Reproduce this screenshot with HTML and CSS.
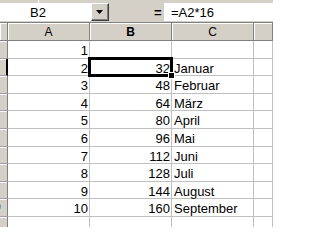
FILE: index.html
```html
<!DOCTYPE html>
<html>
<head>
<meta charset="utf-8">
<link rel="stylesheet" href="styles.css">
</head>
<body>
<div class="toolbar">
  <div class="strip"><div class="strip-seg"></div></div>
  <div class="bar">
    <div class="namebox">B2</div>
    <div class="dropbtn"><svg width="7" height="4" viewBox="0 0 7 4"><path d="M0 0H7L3.5 4Z" fill="#000"/></svg></div>
    <div class="eq">=</div>
    <div class="formula">=A2*16</div>
  </div>
</div>
<div class="sheet">
  <div class="hdr corner"></div><div class="hdr">A</div><div class="hdr sel">B</div><div class="hdr">C</div><div class="hdr"></div>

  <div class="rowhdr"><span>1</span></div><div class="cell num">1</div><div class="cell num"></div><div class="cell txt"></div><div class="cell"></div>
  <div class="rowhdr sel"><span>2</span></div><div class="cell num">2</div><div class="cell num">32</div><div class="cell txt">Januar</div><div class="cell"></div>
  <div class="rowhdr"><span>3</span></div><div class="cell num">3</div><div class="cell num">48</div><div class="cell txt">Februar</div><div class="cell"></div>
  <div class="rowhdr"><span>4</span></div><div class="cell num">4</div><div class="cell num">64</div><div class="cell txt">März</div><div class="cell"></div>
  <div class="rowhdr"><span>5</span></div><div class="cell num">5</div><div class="cell num">80</div><div class="cell txt">April</div><div class="cell"></div>
  <div class="rowhdr"><span>6</span></div><div class="cell num">6</div><div class="cell num">96</div><div class="cell txt">Mai</div><div class="cell"></div>
  <div class="rowhdr"><span>7</span></div><div class="cell num">7</div><div class="cell num">112</div><div class="cell txt">Juni</div><div class="cell"></div>
  <div class="rowhdr"><span>8</span></div><div class="cell num">8</div><div class="cell num">128</div><div class="cell txt">Juli</div><div class="cell"></div>
  <div class="rowhdr"><span>9</span></div><div class="cell num">9</div><div class="cell num">144</div><div class="cell txt">August</div><div class="cell"></div>
  <div class="rowhdr"><span>10</span></div><div class="cell num">10</div><div class="cell num">160</div><div class="cell txt">September</div><div class="cell"></div>
  <div class="rowhdr"><span>11</span></div><div class="cell num"></div><div class="cell num"></div><div class="cell txt"></div><div class="cell"></div>
</div>
<div class="selection"></div>
<div class="handle"></div>
</body>
</html>
```
FILE: styles.css
```css
html, body {
  margin: 0;
  padding: 0;
}
body {
  width: 273px;
  height: 227px;
  overflow: hidden;
  position: relative;
  background: #fff;
  font-family: "Liberation Sans", Arial, sans-serif;
  font-size: 13px;
  color: #000;
}
.toolbar {
  background: #d4d0c8;
  height: 22px;
  display: flex;
  flex-direction: column;
}
.strip {
  height: 3px;
  display: flex;
}
.strip-seg {
  width: 38px;
  border-right: 1px solid #fff;
}
.bar {
  display: flex;
  height: 18px;
}
.namebox {
  width: 91px;
  box-sizing: border-box;
  background: #fff;
  text-align: center;
  padding-right: 15px;
  padding-top: 2px;
  line-height: 16px;
}
.dropbtn {
  width: 18px;
  box-sizing: border-box;
  background: #d4d0c8;
  border: 1px solid;
  border-color: #fff #404040 #404040 #fff;
  box-shadow: inset -1px -1px #808080;
  display: flex;
  align-items: center;
  justify-content: center;
  padding-right: 1px;
}
.eq {
  margin-left: 45px;
  width: 10px;
  font-weight: bold;
  padding-top: 2px;
  line-height: 16px;
}
.formula {
  flex: 1;
  background: #fff;
  padding-left: 7px;
  padding-top: 2px;
  line-height: 16px;
}
.sheet {
  display: grid;
  grid-template-columns: 8px 82px 82px 82px 1fr;
  grid-template-rows: 18px repeat(11, 17.6px);
  border-top: 1px solid #808080;
}
.hdr {
  background: #d4d0c8;
  border-right: 1px solid #808080;
  border-bottom: 1px solid #808080;
  box-shadow: inset 1px 1px #fff;
  box-sizing: border-box;
  text-align: center;
  font-size: 12px;
  line-height: 17px;
  padding-top: 1px;
}
.hdr.sel {
  font-weight: bold;
}
.rowhdr {
  background: #d4d0c8;
  border-right: 1px solid #808080;
  border-bottom: 1px solid #a0a0a0;
  box-shadow: inset 0 1px #fff;
  box-sizing: border-box;
  display: flex;
  justify-content: flex-end;
  overflow: hidden;
  font-size: 12px;
  line-height: 17px;
}
.rowhdr span {
  flex-shrink: 0;
  width: 26px;
  text-align: center;
}
.rowhdr.sel {
  border-right: 2px solid #000;
}
.cell {
  border-right: 1px solid #c0c0c0;
  border-bottom: 1px solid #c0c0c0;
  box-sizing: border-box;
  white-space: nowrap;
  line-height: 17px;
  padding-top: 1px;
}
.num {
  text-align: right;
  padding-right: 1px;
}
.txt {
  padding-left: 2px;
}
.selection {
  position: absolute;
  left: 88px;
  top: 57px;
  width: 85px;
  height: 20px;
  border: 3px solid #000;
  box-sizing: border-box;
}
.handle {
  position: absolute;
  left: 169px;
  top: 73px;
  width: 5px;
  height: 5px;
  background: #000;
  outline: 1px solid #fff;
}
```
